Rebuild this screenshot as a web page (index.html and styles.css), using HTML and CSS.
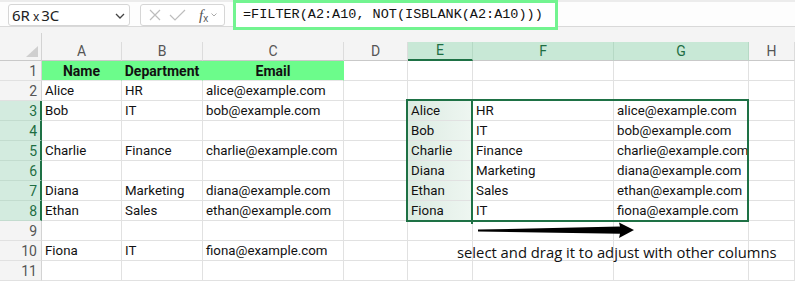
FILE: index.html
```html
<!DOCTYPE html>
<html>
<head>
<meta charset="utf-8">
<link rel="stylesheet" href="styles.css">
</head>
<body>
<div class="app">
  <div class="toolbar">
    <div class="namebox">
      <span class="nb-text">6R<span class="nb-x">x</span>3C</span>
      <svg class="chev" width="10" height="6" viewBox="0 0 10 6"><path d="M1 1 L5 5 L9 1" fill="none" stroke="#444" stroke-width="1.3"/></svg>
    </div>
    <div class="fxbox">
      <svg width="12" height="12" viewBox="0 0 12 12"><path d="M1 1 L11 11 M11 1 L1 11" stroke="#bdbdbd" stroke-width="1.2" fill="none"/></svg>
      <svg width="17" height="12" viewBox="0 0 17 12"><path d="M1 6 L6 11 L16 1" stroke="#bdbdbd" stroke-width="1.2" fill="none"/></svg>
      <span class="fx">f<sub>x</sub></span>
      <svg width="6" height="4" viewBox="0 0 6 4"><path d="M0.5 0.5 L3 3 L5.5 0.5" stroke="#aaa" stroke-width="1" fill="none"/></svg>
    </div>
    <div class="formula">=FILTER(A2:A10, NOT(ISBLANK(A2:A10)))</div>
  </div>
  <div class="band"><div class="band-corner"></div></div>
  <div class="sheet">
    <div class="grid">
      <div class="ch corner"><svg width="12" height="11" viewBox="0 0 12 11"><path d="M12 0 L12 11 L0 11 Z" fill="#cfcfcf"/></svg></div>
      <div class="ch">A</div><div class="ch">B</div><div class="ch">C</div><div class="ch">D</div>
      <div class="ch sel selE">E</div><div class="ch sel">F</div><div class="ch sel">G</div><div class="ch">H</div>

      <div class="rh">1</div><div class="c hd">Name</div><div class="c hd">Department</div><div class="c hd">Email</div><div class="c"></div><div class="c"></div><div class="c"></div><div class="c"></div><div class="c"></div>

      <div class="rh">2</div><div class="c">Alice</div><div class="c">HR</div><div class="c">alice@example.com</div><div class="c"></div><div class="c"></div><div class="c"></div><div class="c"></div><div class="c"></div>

      <div class="rh rs">3</div><div class="c">Bob</div><div class="c">IT</div><div class="c">bob@example.com</div><div class="c"></div><div class="c ce">Alice</div><div class="c">HR</div><div class="c">alice@example.com</div><div class="c"></div>

      <div class="rh rs">4</div><div class="c"></div><div class="c"></div><div class="c"></div><div class="c"></div><div class="c ce">Bob</div><div class="c">IT</div><div class="c">bob@example.com</div><div class="c"></div>

      <div class="rh rs">5</div><div class="c">Charlie</div><div class="c">Finance</div><div class="c">charlie@example.com</div><div class="c"></div><div class="c ce">Charlie</div><div class="c">Finance</div><div class="c">charlie@example.com</div><div class="c"></div>

      <div class="rh rs">6</div><div class="c"></div><div class="c"></div><div class="c"></div><div class="c"></div><div class="c ce">Diana</div><div class="c">Marketing</div><div class="c">diana@example.com</div><div class="c"></div>

      <div class="rh rs">7</div><div class="c">Diana</div><div class="c">Marketing</div><div class="c">diana@example.com</div><div class="c"></div><div class="c ce">Ethan</div><div class="c">Sales</div><div class="c">ethan@example.com</div><div class="c"></div>

      <div class="rh rs">8</div><div class="c">Ethan</div><div class="c">Sales</div><div class="c">ethan@example.com</div><div class="c"></div><div class="c ce">Fiona</div><div class="c">IT</div><div class="c">fiona@example.com</div><div class="c"></div>

      <div class="rh">9</div><div class="c"></div><div class="c"></div><div class="c"></div><div class="c"></div><div class="c"></div><div class="c"></div><div class="c"></div><div class="c"></div>

      <div class="rh">10</div><div class="c">Fiona</div><div class="c">IT</div><div class="c">fiona@example.com</div><div class="c"></div><div class="c"></div><div class="c"></div><div class="c"></div><div class="c"></div>

      <div class="rh">11</div><div class="c"></div><div class="c"></div><div class="c"></div><div class="c"></div><div class="c"></div><div class="c"></div><div class="c"></div><div class="c"></div>
    </div>
    <div class="selbox"></div>
    <div class="selsplit"></div>
    <svg class="arrow" width="170" height="24" viewBox="0 0 170 24"><polygon points="8,11.6 150,8.4 149,4.5 164,12 149,20 150,15.8 8,13.4" fill="#000"/></svg>
    <div class="note">select and drag it to adjust with other columns</div>
  </div>
</div>
</body>
</html>
```
FILE: styles.css
```css
* { box-sizing: border-box; }
html, body { margin: 0; padding: 0; background: #fff; }
body { width: 795px; height: 281px; overflow: hidden; font-family: Roboto, "Liberation Sans", sans-serif; }

.toolbar {
  height: 27px;
  display: flex;
  align-items: flex-start;
  background: #fdfdfd;
  border-top: 2px solid #ececec;
  border-bottom: 1px solid #d9d9d9;
  padding-left: 8px;
}
.namebox {
  margin-top: 2px;
  width: 122px;
  height: 22px;
  border: 1px solid #d6d6d6;
  border-radius: 3px;
  background: #fff;
  display: flex;
  align-items: center;
  justify-content: space-between;
  padding: 0 4px 0 3px;
  font-family: "Noto Sans", sans-serif;
  font-size: 15px;
  color: #222;
}
.nb-x { font-size: 12px; margin: 0 2px 0 3px; }
.chev { margin-top: 2px; }
.fxbox {
  margin-top: 2px;
  margin-left: 10px;
  width: 85px;
  height: 22px;
  border: 1px solid #d6d6d6;
  border-radius: 3px;
  background: #fff;
  display: flex;
  align-items: center;
  gap: 8px;
  padding-left: 8px;
}
.fx {
  font-family: "Liberation Serif", serif;
  font-style: italic;
  font-size: 15px;
  color: #555;
  margin-left: 5px;
  margin-right: -5px;
}
.fx sub { font-size: 10px; font-style: normal; font-family: "Liberation Sans", sans-serif; vertical-align: -2px; }
.formula {
  position: relative;
  z-index: 2;
  margin-left: 8px;
  margin-top: -2px;
  width: 325px;
  height: 30px;
  border: 3px solid #72f490;
  background: #fff;
  font-family: "Liberation Mono", monospace;
  font-size: 13.5px;
  line-height: 23px;
  padding-left: 7px;
  color: #111;
}

.band { height: 15px; background: #f4f4f4; }
.band-corner { width: 42px; height: 15px; border-right: 1px solid #d3d3d3; clip-path: inset(6px 0 0 0); }

.sheet { position: relative; }
.grid {
  display: grid;
  grid-template-columns: 42px 80px 81px 141px 64px 65px 141px 135px 1fr;
  grid-template-rows: 19px repeat(11, 20px);
}
.ch {
  background: #f4f4f4;
  border-right: 1px solid #dcdcdc;
  border-bottom: 1px solid #c9c9c9;
  color: #555;
  font-size: 14px;
  text-align: center;
  line-height: 18px;
}
.ch.corner { border-right: 1px solid #d3d3d3; display: flex; justify-content: flex-end; align-items: flex-end; padding: 0 3px 3px 0; }
.ch.sel { background: #c8e8d6; color: #1e6e43; border-right-color: #b6d9c5; }
.ch.selE { border-bottom: 2px solid #1e7145; line-height: 17px; }
.rh {
  background: #f4f4f4;
  border-right: 1px solid #d3d3d3;
  border-bottom: 1px solid #e1e1e1;
  color: #555;
  font-size: 14px;
  text-align: right;
  padding-right: 4px;
  line-height: 20px;
}
.rh.rs { background: #d3ebdf; color: #1e6e43; border-right: 2px solid #1e7145; padding-right: 3px; border-bottom-color: #c3dccf; }
.c {
  border-right: 1px solid #e1e1e1;
  border-bottom: 1px solid #e1e1e1;
  font-size: 13.3px;
  line-height: 20px;
  padding-left: 3px;
  color: #111;
  white-space: nowrap;
}
.c.hd { background: #6cfc8b; font-weight: bold; font-size: 14px; text-align: center; padding-left: 0; border-right-color: #6cfc8b; border-bottom-color: #e6e6e6; }
.c.ce { background: linear-gradient(90deg, #dcebe2, #eef6f1); }

.selbox {
  position: absolute;
  left: 406px;
  top: 57px;
  width: 343px;
  height: 123px;
  border: 2px solid #1e7145;
  pointer-events: none;
}
.selsplit {
  position: absolute;
  left: 471px;
  top: 57px;
  width: 2px;
  height: 125px;
  background: #1e7145;
}
.arrow { position: absolute; left: 470px; top: 176px; }
.note {
  position: absolute;
  left: 457px;
  top: 200px;
  font-family: "Open Sans", sans-serif;
  font-size: 14.8px;
  color: #111;
  white-space: nowrap;
}
```
